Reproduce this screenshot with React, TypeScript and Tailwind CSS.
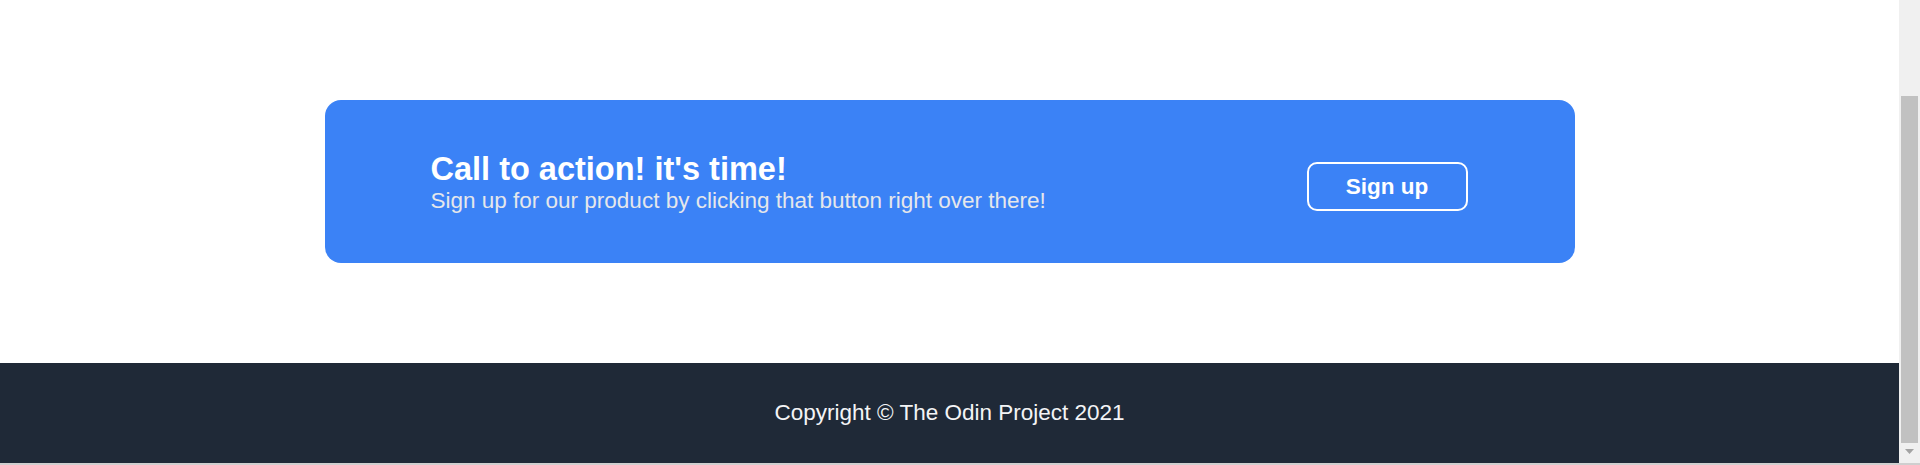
export default function App() {
  return (
    <div
      className="h-[465px] w-full flex flex-col overflow-hidden bg-white"
      style={{ fontFamily: '"Liberation Sans", Arial, sans-serif' }}
    >
      <div className="flex flex-1 min-h-0">
        {/* ── Page ── */}
        <div className="flex-1 flex flex-col">
          <section className="h-[363px] pt-[100px] flex justify-center">
            <div className="w-[1250px] h-[163px] rounded-[16px] bg-[#3b82f6] pl-[106px] pr-[107px] flex items-center justify-between">
              <div className="flex flex-col pt-[2px]">
                <h2 className="text-[32.5px] font-bold text-white leading-[1.15]">Call to action! it's time!</h2>
                <p className="text-[22.5px] text-[#e5e7eb] leading-[1.15]">
                  Sign up for our product by clicking that button right over there!
                </p>
              </div>
              <button className="w-[161px] h-[49px] mt-[10px] rounded-[10px] border-2 border-white text-white text-[22.5px] font-bold flex items-center justify-center">
                Sign up
              </button>
            </div>
          </section>

          <footer className="h-[100px] bg-[#1f2937] flex items-center justify-center">
            <p className="text-[22.5px] text-[#f3f4f6]">Copyright © The Odin Project 2021</p>
          </footer>
        </div>

        {/* ── Scrollbar ── */}
        <div className="w-[21px] bg-[#f0f0f0] flex flex-col items-center pt-[96px]">
          <div className="w-[17px] h-[347px] bg-[#c1c1c1]" />
          <svg width="9" height="6" viewBox="0 0 9 6" className="mt-[6px]">
            <polygon points="0,0 9,0 4.5,5" fill="#a3a3a3" />
          </svg>
        </div>
      </div>
      <div className="h-[2px] bg-[#cfcfcf]" />
    </div>
  );
}
